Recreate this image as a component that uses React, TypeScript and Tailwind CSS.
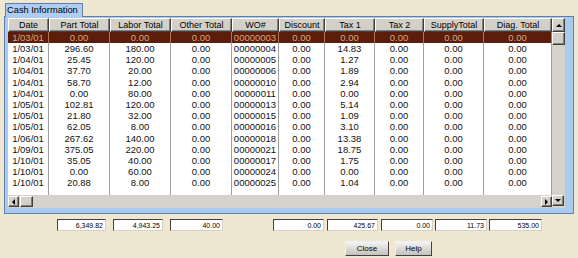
import React from 'react';

type Col = { label: string; w: string };

const cols: Col[] = [
  { label: 'Date', w: 'w-[41px]' },
  { label: 'Part Total', w: 'w-[61px]' },
  { label: 'Labor Total', w: 'w-[61px]' },
  { label: 'Other Total', w: 'w-[61px]' },
  { label: 'WO#', w: 'w-[47px]' },
  { label: 'Discount', w: 'w-[46px]' },
  { label: 'Tax 1', w: 'w-[50px]' },
  { label: 'Tax 2', w: 'w-[49px]' },
  { label: 'SupplyTotal', w: 'w-[60px]' },
  { label: 'Diag. Total', w: 'w-[68px]' },
];

// date, part, labor, other, wo, discount, tax1 (rest are zero)
const rows: string[][] = [
  ['1/03/01', '0.00', '0.00', '0.00', '00000003', '0.00', '0.00'],
  ['1/03/01', '296.60', '180.00', '0.00', '00000004', '0.00', '14.83'],
  ['1/04/01', '25.45', '120.00', '0.00', '00000005', '0.00', '1.27'],
  ['1/04/01', '37.70', '20.00', '0.00', '00000006', '0.00', '1.89'],
  ['1/04/01', '58.70', '12.00', '0.00', '00000010', '0.00', '2.94'],
  ['1/04/01', '0.00', '80.00', '0.00', '00000011', '0.00', '0.00'],
  ['1/05/01', '102.81', '120.00', '0.00', '00000013', '0.00', '5.14'],
  ['1/05/01', '21.80', '32.00', '0.00', '00000015', '0.00', '1.09'],
  ['1/05/01', '62.05', '8.00', '0.00', '00000016', '0.00', '3.10'],
  ['1/06/01', '267.62', '140.00', '0.00', '00000018', '0.00', '13.38'],
  ['1/09/01', '375.05', '220.00', '0.00', '00000021', '0.00', '18.75'],
  ['1/10/01', '35.05', '40.00', '0.00', '00000017', '0.00', '1.75'],
  ['1/10/01', '0.00', '60.00', '0.00', '00000024', '0.00', '0.00'],
  ['1/10/01', '20.88', '8.00', '0.00', '00000025', '0.00', '1.04'],
];

const raised =
  'bg-[#d4d0c8] border border-t-white border-l-white border-r-[#404040] border-b-[#404040] shadow-[inset_-1px_-1px_0_#808080]';

function ScrollBtn({ dir, className }: { dir: 'up' | 'down' | 'left' | 'right'; className: string }) {
  const pts = {
    up: '0,3 6,3 3,0',
    down: '0,0 6,0 3,3',
    left: '3,0 3,6 0,3',
    right: '0,0 0,6 3,3',
  }[dir];
  const vertical = dir === 'up' || dir === 'down';
  return (
    <div className={`flex items-center justify-center ${raised} ${className}`}>
      <svg width={vertical ? 6 : 3} height={vertical ? 3 : 6} viewBox={vertical ? '0 0 6 3' : '0 0 3 6'}>
        <polygon points={pts} fill="#000" />
      </svg>
    </div>
  );
}

function TotalBox({ value, className }: { value: string; className: string }) {
  return (
    <div
      className={`h-[12px] flex items-center justify-end pr-[2px] bg-white border border-t-[#404040] border-l-[#404040] border-r-[#d4d0c8] border-b-[#d4d0c8] text-[7px] leading-none text-black ${className}`}
    >
      {value}
    </div>
  );
}

export default function App() {
  return (
    <div className="w-[578px] h-[258px] overflow-hidden bg-[#efe7cf] font-['Liberation_Sans',Arial,sans-serif] text-black">
      {/* tab */}
      <div className="pt-[3px] pl-[5px]">
        <div className="relative z-10 -mb-px w-[78px] h-[14px] bg-[#aecdf2] border border-b-0 border-[#5f7fa8] flex items-center pl-[1px] text-[9.3px] leading-none">
          Cash Information
        </div>
      </div>

      {/* panel */}
      <div className="ml-[4px] w-[570px] bg-[#a9cbf0] border border-[#5f7fa8] pt-px pl-[3px] pr-[8px] pb-[5px]">
        <div className="flex h-[190px]">
          <div className="w-[544px] flex flex-col">
            {/* header */}
            <div className="flex h-[14px]">
              {cols.map((c) => (
                <div
                  key={c.label}
                  className={`${c.w} h-full flex items-center justify-center text-[9px] leading-none ${raised}`}
                >
                  {c.label}
                </div>
              ))}
            </div>
            {/* body */}
            <div className="h-[163px] bg-white flex flex-col">
              {rows.map((r, i) => {
                const vals = [...r, '0.00', '0.00', '0.00'];
                const sel = i === 0;
                return (
                  <div
                    key={i}
                    className={`flex h-[11.2px] shrink-0 ${sel ? 'bg-[#5c1d0a] text-[#d8a679]' : 'text-[#111]'}`}
                  >
                    {cols.map((c, j) => (
                      <div
                        key={j}
                        className={`${c.w} h-full flex items-center justify-center text-[9.5px] leading-none border-r ${sel ? 'border-[#a87650]' : 'border-[#a0a0a0]'}`}
                      >
                        {vals[j]}
                      </div>
                    ))}
                  </div>
                );
              })}
              <div className="flex flex-1">
                {cols.map((c, j) => (
                  <div key={j} className={`${c.w} h-full border-r border-[#a0a0a0]`} />
                ))}
              </div>
            </div>
            {/* horizontal scrollbar */}
            <div className="h-[13px] bg-[#d6d3cc] flex items-center gap-px">
              <ScrollBtn dir="left" className="w-[11px] h-[11px]" />
              <div className={`w-[13px] h-[11px] ${raised}`} />
              <div className="flex-1" />
              <ScrollBtn dir="right" className="w-[11px] h-[11px]" />
            </div>
          </div>
          {/* vertical scrollbar */}
          <div className="w-[13px] bg-[#d6d3cc] flex flex-col">
            <ScrollBtn dir="up" className="w-[13px] h-[14px]" />
            <div className={`w-[13px] h-[13px] ${raised}`} />
            <div className="flex-1" />
            <ScrollBtn dir="down" className="w-[12px] h-[11px] mb-[2px]" />
          </div>
        </div>
      </div>

      {/* totals */}
      <div className="flex mt-[5px] h-[12px]">
        <TotalBox value="6,349.82" className="ml-[57px] w-[49px]" />
        <TotalBox value="4,943.25" className="ml-[7px] w-[50px]" />
        <TotalBox value="40.00" className="ml-[7px] w-[53px]" />
        <TotalBox value="0.00" className="ml-[50px] w-[51px]" />
        <TotalBox value="425.67" className="ml-[3px] w-[51px]" />
        <TotalBox value="0.00" className="ml-[3px] w-[52px]" />
        <TotalBox value="11.73" className="ml-[2px] w-[52px]" />
        <TotalBox value="535.00" className="ml-[2px] w-[53px]" />
      </div>

      {/* buttons */}
      <div className="flex mt-[10px] pl-[345px] gap-[6px]">
        <button className="w-[44px] h-[15px] flex items-center justify-center text-[8px] leading-none bg-gradient-to-b from-[#f4f4f2] to-[#c4c2bc] border border-t-[#f0f0f0] border-l-[#f0f0f0] border-r-[#404040] border-b-[#404040]">
          Close
        </button>
        <button className="w-[37px] h-[15px] flex items-center justify-center text-[8px] leading-none bg-gradient-to-b from-[#f4f4f2] to-[#c4c2bc] border border-t-[#f0f0f0] border-l-[#f0f0f0] border-r-[#404040] border-b-[#404040]">
          Help
        </button>
      </div>
    </div>
  );
}
